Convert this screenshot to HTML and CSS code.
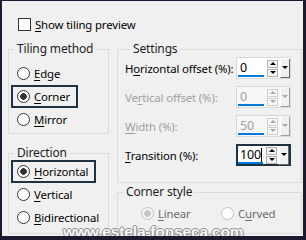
FILE: index.html
```html
<!DOCTYPE html>
<html lang="en">
<head>
    <meta charset="UTF-8">
    <title>Seamless Tiling</title>
    <link rel="stylesheet" href="styles.css">
</head>
<body>
    <div class="window">
        <label class="preview">
            <span class="check"></span>
            <span><u>S</u>how tiling preview</span>
        </label>

        <div class="panels">
            <div class="column">
                <fieldset class="group group-tiling">
                    <legend>Tiling method</legend>
                    <div class="radio"><span class="dot"></span><span><u>E</u>dge</span></div>
                    <div class="radio focused"><span class="dot checked"></span><span><u>C</u>orner</span></div>
                    <div class="radio"><span class="dot"></span><span><u>M</u>irror</span></div>
                </fieldset>

                <fieldset class="group group-direction">
                    <legend>Direction</legend>
                    <div class="radio focused"><span class="dot checked"></span><span><u>H</u>orizontal</span></div>
                    <div class="radio"><span class="dot"></span><span><u>V</u>ertical</span></div>
                    <div class="radio"><span class="dot"></span><span><u>B</u>idirectional</span></div>
                </fieldset>
            </div>

            <div class="column column-right">
                <fieldset class="group group-settings">
                    <legend>Settings</legend>
                    <div class="field-row">
                        <span class="label">H<u>o</u>rizontal offset (%):</span>
                        <div class="spin">
                            <div class="spin-value">0</div>
                            <div class="spin-arrows"><b class="up"></b><b class="down"></b></div>
                            <div class="spin-drop"></div>
                        </div>
                    </div>
                    <div class="field-row disabled">
                        <span class="label">Ve<u>r</u>tical offset (%):</span>
                        <div class="spin">
                            <div class="spin-value">0</div>
                            <div class="spin-arrows"><b class="up"></b><b class="down"></b></div>
                            <div class="spin-drop"></div>
                        </div>
                    </div>
                    <div class="field-row disabled">
                        <span class="label"><u>W</u>idth (%):</span>
                        <div class="spin">
                            <div class="spin-value">50</div>
                            <div class="spin-arrows"><b class="up"></b><b class="down"></b></div>
                            <div class="spin-drop"></div>
                        </div>
                    </div>
                    <div class="field-row">
                        <span class="label"><u>T</u>ransition (%):</span>
                        <div class="spin spin-focused">
                            <div class="spin-value">100<i class="caret"></i></div>
                            <div class="spin-arrows"><b class="up"></b><b class="down"></b></div>
                            <div class="spin-drop"></div>
                        </div>
                    </div>
                </fieldset>

                <fieldset class="group group-corner">
                    <legend>Corner style</legend>
                    <div class="corner-options">
                        <div class="radio-inline"><span class="dot disabled checked"></span><span><u>L</u>inear</span></div>
                        <div class="radio-inline"><span class="dot disabled"></span><span>C<u>u</u>rved</span></div>
                    </div>
                </fieldset>
            </div>
        </div>

        <div class="watermark">www.estela-fonseca.com</div>
    </div>
</body>
</html>
```

FILE: styles.css
```css
:root {
    --frame: #1c1a30;
    --panel-bg: #f0f0f0;
    --group-line: #dcdcdc;
    --text: #000000;
    --text-disabled: #a0a0a0;
    --text-muted: #6d6d6d;
    --accent: #0078d7;
    --focus: #1f3242;
}

* {
    margin: 0;
    padding: 0;
    box-sizing: border-box;
}

body {
    width: 306px;
    height: 240px;
    font-family: "Noto Sans", "Open Sans", sans-serif;
    font-size: 11.4px;
    letter-spacing: -0.15px;
    color: var(--text);
}

u {
    text-decoration-thickness: 1px;
    text-underline-offset: 2px;
}

.window {
    position: relative;
    width: 306px;
    height: 240px;
    background: var(--panel-bg);
    border-style: solid;
    border-color: var(--frame);
    border-width: 1px 3px 4px 2px;
    overflow: hidden;
}

/* checkbox row */
.preview {
    display: flex;
    align-items: center;
    gap: 4px;
    height: 13px;
    margin: 17px 0 0 16px;
    white-space: nowrap;
}

.check {
    width: 13px;
    height: 13px;
    border: 1px solid #333333;
    background: #ffffff;
}

/* two columns of group boxes */
.panels {
    display: grid;
    grid-template-columns: 101px 185px;
    column-gap: 8px;
    padding-left: 6px;
    margin-top: 11px;
}

.column {
    display: flex;
    flex-direction: column;
    gap: 12px;
}

.column-right {
    gap: 2px;
}

.group {
    border: 1px solid var(--group-line);
    min-width: 0;
}

.group legend {
    margin-left: 5px;
    padding: 0 3px;
    line-height: 14px;
    font-size: 12px;
    color: #1e1e1e;
}

.group-tiling {
    padding: 6px 0 2px;
}

.group-direction {
    padding: 0 0 4px;
}

.group-settings {
    padding: 1px 10px 16px 7px;
}

.group-corner {
    padding: 3px 0 8px;
}

/* radio buttons */
.radio {
    display: flex;
    align-items: center;
    width: fit-content;
    height: 23px;
    margin-left: 2px;
    padding: 0 6px 0 4px;
    border: 2px solid transparent;
    white-space: nowrap;
}

.radio.focused {
    border-color: var(--focus);
}

.dot {
    flex: none;
    width: 13px;
    height: 13px;
    margin-right: 4px;
    border: 1px solid #333333;
    border-radius: 50%;
    background: #ffffff;
}

.dot.checked {
    background: radial-gradient(circle, #333333 3px, #ffffff 3.6px);
}

.dot.disabled {
    border-color: #c4c4c4;
}

.dot.disabled.checked {
    background: radial-gradient(circle, #c4c4c4 3px, #f4f4f4 3.6px);
}

.corner-options {
    display: flex;
    align-items: center;
    height: 23px;
    padding-left: 23px;
    color: var(--text-muted);
}

.radio-inline {
    display: flex;
    align-items: center;
    width: 81px;
    white-space: nowrap;
}

/* spin fields */
.field-row {
    display: flex;
    align-items: center;
    justify-content: space-between;
    height: 22px;
    margin-bottom: 7px;
}

.field-row:last-child {
    margin-bottom: 0;
}

.label {
    white-space: nowrap;
}

.disabled .label {
    color: var(--text-disabled);
}

.spin {
    display: flex;
    align-items: center;
    width: 55px;
    height: 22px;
    background: #ffffff;
    border: 1px solid #d9d9d9;
}

.spin-focused {
    border: 2px solid var(--focus);
}

.spin-value {
    display: flex;
    align-items: center;
    width: 27px;
    height: 17px;
    margin: 0 1px 1px 1px;
    padding-left: 2px;
    align-self: flex-end;
    border-bottom: 2px solid var(--accent);
    line-height: 14px;
    font-size: 12.5px;
}

.spin-focused .spin-value {
    margin-left: 0;
    margin-bottom: 0;
}

.caret {
    width: 1px;
    height: 14px;
    background: #000000;
}

.disabled .spin {
    background: #f6f6f6;
}

.disabled .spin-value {
    color: var(--text-disabled);
}

.spin-arrows {
    display: flex;
    flex-direction: column;
    gap: 1px;
    margin-left: 2px;
}

.spin-arrows b {
    display: flex;
    align-items: center;
    justify-content: center;
    width: 11px;
    height: 8px;
    border: 1px solid #adadad;
    background: #f7f7f7;
}

.spin-arrows .up::before,
.spin-arrows .down::before,
.spin-drop::before {
    content: "";
    border-left: 3px solid transparent;
    border-right: 3px solid transparent;
}

.spin-arrows .up::before {
    border-bottom: 3px solid #000000;
}

.spin-arrows .down::before,
.spin-drop::before {
    border-top: 3px solid #000000;
}

.spin-drop {
    display: flex;
    align-items: center;
    justify-content: center;
    width: 10px;
    height: 19px;
    margin-left: 2px;
    background: #f0f0f0;
    border-left: 1px solid #ffffff;
    border-right: 1px solid #696969;
    border-bottom: 1px solid #696969;
}

.disabled .spin-arrows b {
    border-color: #cfcfcf;
}

.disabled .spin-arrows .up::before {
    border-bottom-color: #a8a8a8;
}

.disabled .spin-arrows .down::before,
.disabled .spin-drop::before {
    border-top-color: #a8a8a8;
}

.disabled .spin-drop {
    border-right-color: #a0a0a0;
    border-bottom-color: #a0a0a0;
}

/* watermark over the dialog */
.watermark {
    position: absolute;
    left: 61px;
    top: 224px;
    font-family: "Liberation Sans", Arial, sans-serif;
    font-size: 15.5px;
    line-height: 13px;
    font-weight: bold;
    color: #f7f7f7;
    text-shadow: 1px 0 #8f8f8f, -1px 0 #8f8f8f, 0 1px #8f8f8f, 0 -1px #8f8f8f;
    white-space: nowrap;
}
```
